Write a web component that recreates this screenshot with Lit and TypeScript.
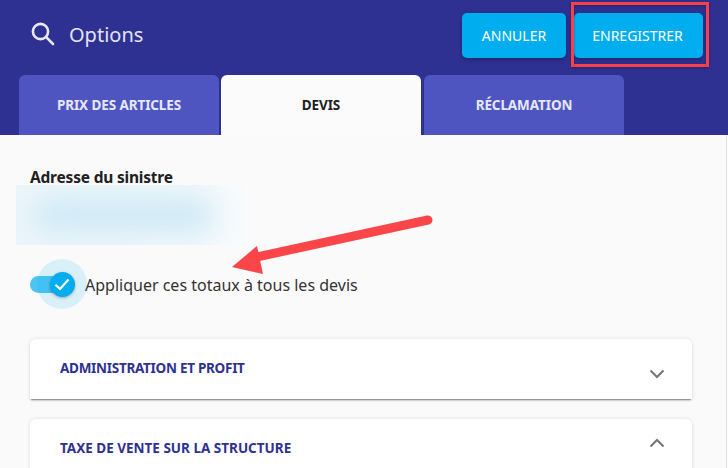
import { LitElement, html, css } from "lit";
import { customElement } from "lit/decorators.js";

@customElement("app-root")
export class AppRoot extends LitElement {
  static styles = css`
    :host { display: block; position: relative; width: 728px; height: 468px; overflow: hidden; background: #fafafa; font-family: "Noto Sans", "Open Sans", sans-serif; color: #212121; }
    .header { background: #2e3192; height: 135px; display: flex; flex-direction: column; box-sizing: border-box; }
    .top { height: 75px; display: flex; padding: 13px 25px 0 30px; box-sizing: border-box; }
    .search { width: 26px; height: 26px; margin-top: 8px; }
    .title { margin-left: 13px; font-size: 20px; line-height: 43px; color: #e4e4f4; height: 45px; }
    .spacer { flex: 1; }
    .btn { height: 45px; border-radius: 5px; background: #00aeef; color: #fff; display: flex; align-items: center; justify-content: center; font-size: 14px; box-shadow: 0 2px 4px rgba(0,0,0,.25); padding-bottom: 1px; box-sizing: border-box; }
    .cancel { width: 104px; margin-right: 8px; }
    .save { width: 129px; padding-right: 2px; }
    .tabs { display: flex; height: 60px; padding-left: 19px; }
    .tab { width: 200px; border-radius: 6px 6px 0 0; background: #4f55c0; color: #e6e8fa; font-weight: 700; font-size: 13.5px; display: flex; align-items: center; justify-content: center; box-sizing: border-box; letter-spacing: -0.1px; }
    .tab + .tab { margin-left: 2px; }
    .tab.last { margin-left: 3px; }
    .tab.active { background: #fbfbfb; color: #212121; }
    .content { padding: 32px 36px 0 30px; }
    .label { font-weight: 700; font-size: 15.5px; line-height: 20px; letter-spacing: -0.2px; color: #212121; }
    .blur-wrap { height: 60px; margin: -2px 0 0 -14px; width: 232px; overflow: hidden; background: linear-gradient(90deg, #ebf5fa 0%, #f0f8fb 75%, #f9fbfc 100%); }
    .blur { width: 180px; height: 36px; margin: 12px 0 0 18px; border-radius: 18px; background: #d0eaf6; filter: blur(13px); }
    .toggle-row { display: flex; align-items: center; height: 50px; margin-top: 14px; }
    .toggle { position: relative; width: 55px; height: 50px; flex: none; }
    .track { position: absolute; left: 0; top: 17px; width: 38px; height: 17px; border-radius: 9px; background: #4cc5f3; }
    .halo { position: absolute; left: 7px; top: 0; width: 50px; height: 50px; border-radius: 50%; background: rgba(0,174,239,.13); }
    .thumb { position: absolute; left: 19.5px; top: 12.5px; width: 25px; height: 25px; border-radius: 50%; background: #00aeef; box-shadow: 0 1px 3px rgba(0,0,0,.3); display: flex; align-items: center; justify-content: center; }
    .toggle-text { font-size: 16px; color: #333; padding-top: 1px; }
    .cards { margin-top: 30px; display: flex; flex-direction: column; gap: 20px; }
    .card { height: 60px; background: #fff; border-radius: 6px 6px 0 0; display: flex; justify-content: space-between; padding: 0 26px 0 30px; box-shadow: 0 2px 2px -1px rgba(0,0,0,.5), 0 0 4px rgba(0,0,0,.1); }
    .card.open { height: 80px; box-shadow: 0 0 4px rgba(0,0,0,.12); }
    .card-title { font-weight: 700; font-size: 13.5px; line-height: 19px; color: #2e3192; margin-top: 20px; letter-spacing: -0.28px; }
    .card.open .card-title { letter-spacing: 0; }
    .chev { width: 18px; height: 12px; margin-top: 29px; }
    .chev.up { margin-top: 18px; }
    .edge { position: absolute; top: 135px; bottom: 0; right: 0; width: 2px; background: #fff; border-left: 1px solid #e0e0e0; box-sizing: border-box; }
    .overlay { position: absolute; left: 0; top: 0; width: 728px; height: 468px; pointer-events: none; }
  `;

  render() {
    return html`
      <div class="header">
        <div class="top">
          <svg class="search" viewBox="0 0 26 26" fill="none" stroke="#e8e8f6" stroke-width="2.6" stroke-linecap="round">
            <circle cx="10.5" cy="10.5" r="7.6"></circle><path d="M16.2 16.2 L23 23"></path>
          </svg>
          <div class="title">Options</div>
          <div class="spacer"></div>
          <div class="btn cancel">ANNULER</div>
          <div class="btn save">ENREGISTRER</div>
        </div>
        <div class="tabs">
          <div class="tab">PRIX DES ARTICLES</div>
          <div class="tab active">DEVIS</div>
          <div class="tab last">RÉCLAMATION</div>
        </div>
      </div>
      <div class="content">
        <div class="label">Adresse du sinistre</div>
        <div class="blur-wrap"><div class="blur"></div></div>
        <div class="toggle-row">
          <div class="toggle">
            <div class="track"></div>
            <div class="halo"></div>
            <div class="thumb">
              <svg width="16" height="13" viewBox="0 0 16 13" fill="none" stroke="#fff" stroke-width="2.2"><path d="M1.5 6.8 L6 11 L14.5 1.5"></path></svg>
            </div>
          </div>
          <div class="toggle-text">Appliquer ces totaux à tous les devis</div>
        </div>
        <div class="cards">
          <div class="card">
            <div class="card-title">ADMINISTRATION ET PROFIT</div>
            <svg class="chev" viewBox="0 0 18 12" fill="none" stroke="#757575" stroke-width="2"><path d="M2.5 2.5 L9 9 L15.5 2.5"></path></svg>
          </div>
          <div class="card open">
            <div class="card-title">TAXE DE VENTE SUR LA STRUCTURE</div>
            <svg class="chev up" viewBox="0 0 18 12" fill="none" stroke="#757575" stroke-width="2"><path d="M2.5 9.5 L9 3 L15.5 9.5"></path></svg>
          </div>
        </div>
      </div>
      <div class="edge"></div>
      <svg class="overlay" viewBox="0 0 728 468">
        <defs><filter id="s" x="-10%" y="-10%" width="120%" height="130%"><feDropShadow dx="0" dy="1" stdDeviation="1.5" flood-color="#000" flood-opacity=".3"></feDropShadow></filter></defs>
        <rect x="572.5" y="3.5" width="135" height="62" fill="none" stroke="#f7404a" stroke-width="3" filter="url(#s)"></rect>
        <path d="M428 220 L252 258" fill="none" stroke="#fb4649" stroke-width="9" stroke-linecap="round"></path>
        <path d="M232 267 L257 246 L263 274 Z" fill="#fb4649"></path>
      </svg>
    `;
  }
}
